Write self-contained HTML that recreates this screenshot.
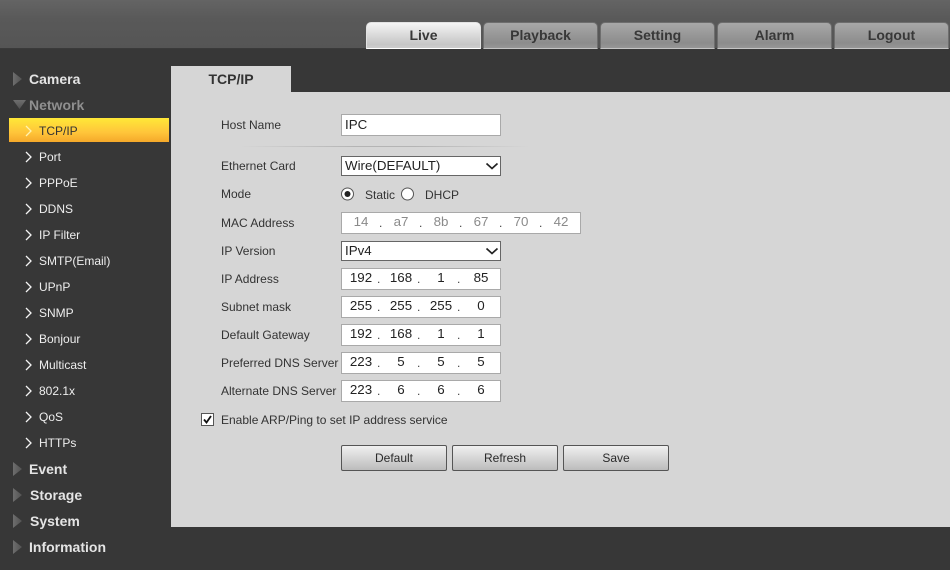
<!DOCTYPE html>
<html><head><meta charset="utf-8"><style>
html,body{margin:0;padding:0}
body{width:950px;height:570px;overflow:hidden;background:#373737;position:relative;font-family:"Liberation Sans",Arial,sans-serif}
div,span{position:absolute;white-space:nowrap;box-sizing:border-box}
#top{left:0;top:0;width:950px;height:49px;background:linear-gradient(#646464,#595959 40%,#555);border-bottom:1px solid #3a3a3a}
.t{top:22px;width:115px;height:27px;border-radius:5px 5px 0 0;border:1px solid #6e6e6e;border-bottom:1px solid #c4c4c4;background:linear-gradient(#a8a8a8,#8c8c8c 80%,#969696);font:bold 14px/25px "Liberation Sans",sans-serif;color:#383838;text-align:center}
.t.on{border-color:#e2e2e2;border-bottom-color:#fff;background:linear-gradient(#f4f4f4,#c6c6c6 85%,#ccc)}
.m{left:29px;font:bold 14px/18px "Liberation Sans",sans-serif;color:#e4e4e4}
.a{left:13px;width:9px;height:14px;background:linear-gradient(90deg,#6e6e6e,#525252);clip-path:polygon(0 0,100% 50%,0 100%)}
.s{left:39px;font:12px/16px "Liberation Sans",sans-serif;color:#eee}
svg{position:absolute}
#panel{left:171px;top:92px;width:779px;height:435px;background:#d6d6d6}
#tab{left:171px;top:66px;width:120px;height:26px;background:#d6d6d6;font:bold 14px/26px "Liberation Sans",sans-serif;color:#333;text-align:center}
.l{left:221px;font:12px/16px "Liberation Sans",sans-serif;color:#333}
.i{left:341px;width:160px;height:22px;background:#fff;border:1px solid #a9a9a9}
.sel{left:341px;width:160px;height:20px;background:#fff;border:1px solid #666;font:13.33px/17px "Liberation Sans",sans-serif;color:#222;padding-left:3px}
.v{font:13.33px/18px "Liberation Sans",sans-serif;color:#222;top:0;text-align:center;width:30px}
.g{color:#8a8a8a}
.d{font:12px/20px "Liberation Sans",sans-serif;top:0;color:#444}
.b{top:445px;width:106px;height:26px;border:1px solid #555;border-radius:2px;background:linear-gradient(#f0f0f0,#bcbcbc);font:12px/24px "Liberation Sans",sans-serif;color:#2a2a2a;text-align:center}
</style></head><body>
<div id="top"></div>
<div class="t on" style="left:366px">Live</div>
<div class="t" style="left:483px">Playback</div>
<div class="t" style="left:600px">Setting</div>
<div class="t" style="left:717px">Alarm</div>
<div class="t" style="left:834px">Logout</div>

<div class="a" style="top:72px"></div><div class="m" style="top:70px">Camera</div>
<div style="left:13px;top:100px;width:13px;height:9px;background:linear-gradient(#6e6e6e,#525252);clip-path:polygon(0 0,100% 0,50% 100%)"></div><div class="m" style="top:96px;color:#8f8f8f">Network</div>
<div style="left:9px;top:118px;width:160px;height:24px;background:linear-gradient(#ffe838,#ffc53a 60%,#f5a82a)"></div>
<svg width="950" height="570" style="left:0;top:0" fill="none" stroke="#f4f4f4" stroke-width="1.3">
<path stroke="#fff3b0" d="M26 126l5 5-5 5"/><path d="M26 152l5 5-5 5M26 178l5 5-5 5M26 204l5 5-5 5M26 230l5 5-5 5M26 256l5 5-5 5M26 282l5 5-5 5M26 308l5 5-5 5M26 334l5 5-5 5M26 360l5 5-5 5M26 386l5 5-5 5M26 412l5 5-5 5M26 438l5 5-5 5"/>
</svg>
<div class="s" style="top:123px;color:#333">TCP/IP</div>
<div class="s" style="top:149px">Port</div>
<div class="s" style="top:175px">PPPoE</div>
<div class="s" style="top:201px">DDNS</div>
<div class="s" style="top:227px">IP Filter</div>
<div class="s" style="top:253px">SMTP(Email)</div>
<div class="s" style="top:279px">UPnP</div>
<div class="s" style="top:305px">SNMP</div>
<div class="s" style="top:331px">Bonjour</div>
<div class="s" style="top:357px">Multicast</div>
<div class="s" style="top:383px">802.1x</div>
<div class="s" style="top:409px">QoS</div>
<div class="s" style="top:435px">HTTPs</div>
<div class="a" style="top:462px"></div><div class="m" style="top:460px">Event</div>
<div class="a" style="top:488px"></div><div class="m" style="top:486px;left:30px">Storage</div>
<div class="a" style="top:514px"></div><div class="m" style="top:512px;left:30px">System</div>
<div class="a" style="top:540px"></div><div class="m" style="top:538px">Information</div>

<div id="panel"></div><div id="tab">TCP/IP</div>

<div class="l" style="top:117px">Host Name</div>
<div class="i" style="top:114px;font:13.33px/19px 'Liberation Sans',sans-serif;color:#222;padding-left:3px">IPC</div>
<div style="left:240px;top:146px;width:290px;height:1px;background:linear-gradient(90deg,#d6d6d6,#b4b4b4 40%,#b4b4b4 60%,#d6d6d6)"></div>

<div class="l" style="top:158px">Ethernet Card</div>
<div class="sel" style="top:156px">Wire(DEFAULT)<svg width="14" height="9" style="left:143px;top:5px" fill="none" stroke="#222" stroke-width="1.7"><path d="M1.5 1.5l5.5 5 5.5-5"/></svg></div>

<div class="l" style="top:186px">Mode</div>
<svg width="130" height="20" style="left:340px;top:184px"><circle cx="7.5" cy="10" r="6" fill="#fff" stroke="#555"/><circle cx="7.5" cy="10" r="3" fill="#222"/><circle cx="67.5" cy="10" r="6" fill="#fff" stroke="#555"/></svg>
<div class="l" style="left:365px;top:187px">Static</div>
<div class="l" style="left:425px;top:187px">DHCP</div>

<div class="l" style="top:215px">MAC Address</div>
<div class="i" style="top:212px;width:240px">
<span class="v g" style="left:4px">14</span><span class="d g" style="left:37px">.</span>
<span class="v g" style="left:44px">a7</span><span class="d g" style="left:77px">.</span>
<span class="v g" style="left:84px">8b</span><span class="d g" style="left:117px">.</span>
<span class="v g" style="left:124px">67</span><span class="d g" style="left:157px">.</span>
<span class="v g" style="left:164px">70</span><span class="d g" style="left:197px">.</span>
<span class="v g" style="left:204px">42</span></div>

<div class="l" style="top:243px">IP Version</div>
<div class="sel" style="top:241px">IPv4<svg width="14" height="9" style="left:143px;top:5px" fill="none" stroke="#222" stroke-width="1.7"><path d="M1.5 1.5l5.5 5 5.5-5"/></svg></div>

<div class="l" style="top:271px">IP Address</div>
<div class="i" style="top:268px"><span class="v" style="left:4px">192</span><span class="d" style="left:35px">.</span><span class="v" style="left:44px">168</span><span class="d" style="left:75px">.</span><span class="v" style="left:84px">1</span><span class="d" style="left:115px">.</span><span class="v" style="left:124px">85</span></div>

<div class="l" style="top:299px">Subnet mask</div>
<div class="i" style="top:296px"><span class="v" style="left:4px">255</span><span class="d" style="left:35px">.</span><span class="v" style="left:44px">255</span><span class="d" style="left:75px">.</span><span class="v" style="left:84px">255</span><span class="d" style="left:115px">.</span><span class="v" style="left:124px">0</span></div>

<div class="l" style="top:327px">Default Gateway</div>
<div class="i" style="top:324px"><span class="v" style="left:4px">192</span><span class="d" style="left:35px">.</span><span class="v" style="left:44px">168</span><span class="d" style="left:75px">.</span><span class="v" style="left:84px">1</span><span class="d" style="left:115px">.</span><span class="v" style="left:124px">1</span></div>

<div class="l" style="top:355px">Preferred DNS Server</div>
<div class="i" style="top:352px"><span class="v" style="left:4px">223</span><span class="d" style="left:35px">.</span><span class="v" style="left:44px">5</span><span class="d" style="left:75px">.</span><span class="v" style="left:84px">5</span><span class="d" style="left:115px">.</span><span class="v" style="left:124px">5</span></div>

<div class="l" style="top:383px">Alternate DNS Server</div>
<div class="i" style="top:380px"><span class="v" style="left:4px">223</span><span class="d" style="left:35px">.</span><span class="v" style="left:44px">6</span><span class="d" style="left:75px">.</span><span class="v" style="left:84px">6</span><span class="d" style="left:115px">.</span><span class="v" style="left:124px">6</span></div>

<svg width="14" height="14" style="left:201px;top:413px"><rect x=".5" y=".5" width="12" height="12" fill="#fff" stroke="#555"/><path d="M3 6.5l2.5 3 4.5-6.5" fill="none" stroke="#111" stroke-width="1.8"/></svg>
<div class="l" style="top:412px">Enable ARP/Ping to set IP address service</div>

<div class="b" style="left:341px">Default</div>
<div class="b" style="left:452px">Refresh</div>
<div class="b" style="left:563px">Save</div>
</body></html>
